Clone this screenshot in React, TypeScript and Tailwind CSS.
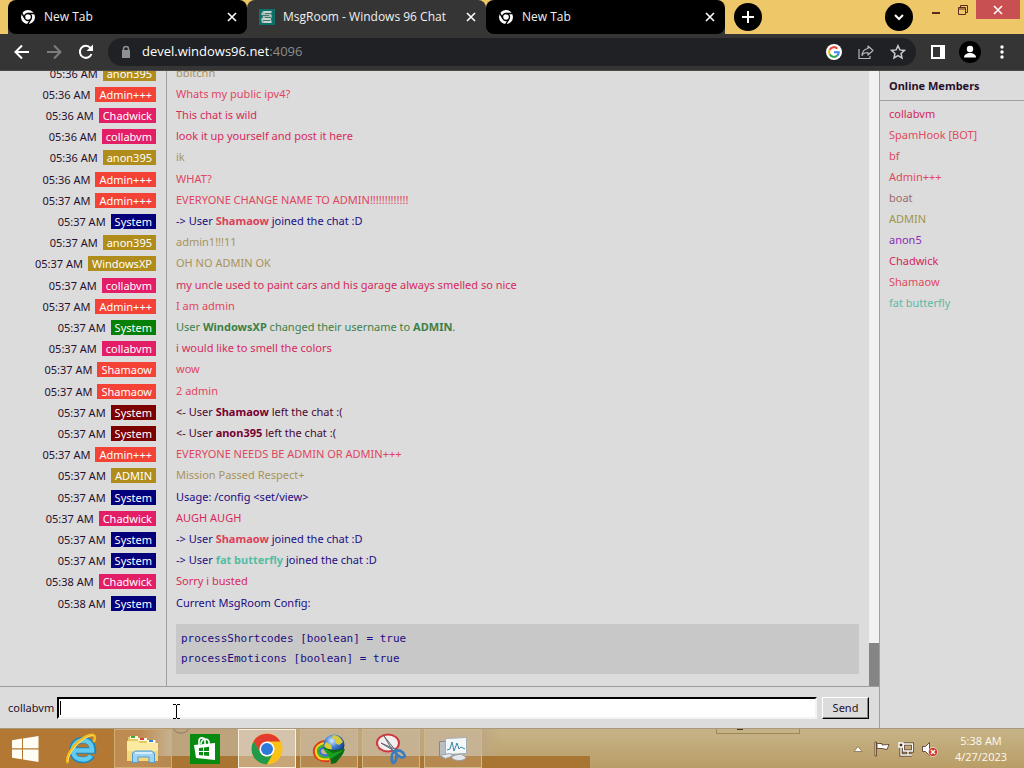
import React from 'react';
import type { ReactNode } from 'react';

type Message = { time: string; user: string; tag: string; tone: string; body: ReactNode };

const RED_TAG = 'bg-[#f44336]';
const PINK_TAG = 'bg-[#e31d66]';
const GOLD_TAG = 'bg-[#b08d1a]';
const NAVY_TAG = 'bg-[#04007c]';
const MAROON_TAG = 'bg-[#7c0000]';
const GREEN_TAG = 'bg-[#068006]';

const RED = 'text-[#e04560]';
const PINK = 'text-[#d62a5c]';
const GOLD = 'text-[#a8925a]';
const NAVY = 'text-[#1c0c80]';
const MAROON = 'text-[#4a0830]';
const GREEN = 'text-[#3c8048]';

const joined = (name: string, color: string) => (
  <>
    -&gt; User <b className={color}>{name}</b> joined the chat :D
  </>
);
const left = (name: string) => (
  <>
    &lt;- User <b className="text-[#780030]">{name}</b> left the chat :(
  </>
);

const messages: Message[] = [
  { time: '05:36 AM', user: 'anon395', tag: GOLD_TAG, tone: GOLD, body: 'bbitchh' },
  { time: '05:36 AM', user: 'Admin+++', tag: RED_TAG, tone: RED, body: 'Whats my public ipv4?' },
  { time: '05:36 AM', user: 'Chadwick', tag: PINK_TAG, tone: PINK, body: 'This chat is wild' },
  { time: '05:36 AM', user: 'collabvm', tag: PINK_TAG, tone: PINK, body: 'look it up yourself and post it here' },
  { time: '05:36 AM', user: 'anon395', tag: GOLD_TAG, tone: GOLD, body: 'ik' },
  { time: '05:36 AM', user: 'Admin+++', tag: RED_TAG, tone: RED, body: 'WHAT?' },
  { time: '05:37 AM', user: 'Admin+++', tag: RED_TAG, tone: RED, body: 'EVERYONE CHANGE NAME TO ADMIN!!!!!!!!!!!!!' },
  { time: '05:37 AM', user: 'System', tag: NAVY_TAG, tone: NAVY, body: joined('Shamaow', 'text-[#dc4058]') },
  { time: '05:37 AM', user: 'anon395', tag: GOLD_TAG, tone: GOLD, body: 'admin1!!!11' },
  { time: '05:37 AM', user: 'WindowsXP', tag: GOLD_TAG, tone: GOLD, body: 'OH NO ADMIN OK' },
  { time: '05:37 AM', user: 'collabvm', tag: PINK_TAG, tone: PINK, body: 'my uncle used to paint cars and his garage always smelled so nice' },
  { time: '05:37 AM', user: 'Admin+++', tag: RED_TAG, tone: RED, body: 'I am admin' },
  {
    time: '05:37 AM', user: 'System', tag: GREEN_TAG, tone: GREEN,
    body: <>User <b>WindowsXP</b> changed their username to <b>ADMIN</b>.</>,
  },
  { time: '05:37 AM', user: 'collabvm', tag: PINK_TAG, tone: PINK, body: 'i would like to smell the colors' },
  { time: '05:37 AM', user: 'Shamaow', tag: RED_TAG, tone: RED, body: 'wow' },
  { time: '05:37 AM', user: 'Shamaow', tag: RED_TAG, tone: RED, body: '2 admin' },
  { time: '05:37 AM', user: 'System', tag: MAROON_TAG, tone: MAROON, body: left('Shamaow') },
  { time: '05:37 AM', user: 'System', tag: MAROON_TAG, tone: MAROON, body: left('anon395') },
  { time: '05:37 AM', user: 'Admin+++', tag: RED_TAG, tone: RED, body: 'EVERYONE NEEDS BE ADMIN OR ADMIN+++' },
  { time: '05:37 AM', user: 'ADMIN', tag: GOLD_TAG, tone: GOLD, body: 'Mission Passed Respect+' },
  { time: '05:37 AM', user: 'System', tag: NAVY_TAG, tone: NAVY, body: 'Usage: /config <set/view>' },
  { time: '05:37 AM', user: 'Chadwick', tag: PINK_TAG, tone: PINK, body: 'AUGH AUGH' },
  { time: '05:37 AM', user: 'System', tag: NAVY_TAG, tone: NAVY, body: joined('Shamaow', 'text-[#dc4058]') },
  { time: '05:37 AM', user: 'System', tag: NAVY_TAG, tone: NAVY, body: joined('fat butterfly', 'text-[#54bca4]') },
  { time: '05:38 AM', user: 'Chadwick', tag: PINK_TAG, tone: PINK, body: 'Sorry i busted' },
  {
    time: '05:38 AM', user: 'System', tag: NAVY_TAG, tone: NAVY,
    body: (
      <>
        Current MsgRoom Config:
        <pre className="mt-[14px] bg-[#c8c8c8] p-[5px] font-['DejaVu_Sans_Mono',monospace] text-[11px] leading-5">
          {'processShortcodes [boolean] = true\nprocessEmoticons [boolean] = true'}
        </pre>
      </>
    ),
  },
];

const members = [
  ['collabvm', 'text-[#d4265a]'],
  ['SpamHook [BOT]', 'text-[#e04a60]'],
  ['bf', 'text-[#e04a60]'],
  ['Admin+++', 'text-[#e04a60]'],
  ['boat', 'text-[#9c6870]'],
  ['ADMIN', 'text-[#a09450]'],
  ['anon5', 'text-[#8a2cb4]'],
  ['Chadwick', 'text-[#d4265a]'],
  ['Shamaow', 'text-[#e04a60]'],
  ['fat butterfly', 'text-[#5cb8a6]'],
];

function ChromeMono() {
  return (
    <svg viewBox="0 0 16 16" className="size-4" aria-hidden="true">
      <circle cx="8" cy="8" r="7" fill="#fff" />
      <circle cx="8" cy="8" r="3.5" fill="none" stroke="#000" strokeWidth="1.4" />
      <path d="M8 4.5h7M4.9 9.7L1.6 3.9M11 9.8L7.7 15.4" stroke="#000" strokeWidth="1.4" />
    </svg>
  );
}

function RoomIcon() {
  return (
    <svg viewBox="0 0 16 16" className="size-4" aria-hidden="true">
      <path fill="#0c7068" d="M0 0h16v16H0z" />
      <path fill="#a8bcb8" d="M4 2h9l-1 3 1 2-1 3 1 4H3l-1-4 2-2-2-3z" />
      <path fill="none" stroke="#44786f" d="M6 4.500h6M3 6.500h7M6 8.500h6M4 11.500h7" />
      <path fill="none" stroke="#e0ece8" d="M5 3h7M4 10h7M5 13h7" />
    </svg>
  );
}

function ChromeColor() {
  return (
    <svg viewBox="0 0 32 32" className="size-8" aria-hidden="true">
      <circle cx="16" cy="16" r="15.5" fill="#fbc116" />
      <path fill="#e33b2e" d="M2.6 8.2A15.5 15.5 0 0 1 29.4 8.5H16L9.3 19.8z" />
      <path fill="#229a4b" d="M2.6 8.2 9.5 19.8A7.5 7.5 0 0 0 22.5 19.8L15.8 31.5A15.5 15.5 0 0 1 2.6 8.2z" />
      <circle cx="16" cy="16" r="7.6" fill="#fff" />
      <circle cx="16" cy="16" r="6" fill="#2f78dc" />
    </svg>
  );
}

function StartIcon() {
  return (
    <svg viewBox="0 0 28 26" className="h-[26px] w-7" aria-hidden="true">
      <path fill="#fffdf4" d="M1 4.2 11 2.6v9.7H1zM12 2.4 27.5 0v12.3H12zM1 13.4h10v9.8L1 21.8zM12 13.4h15.5V26L12 23.5z" />
    </svg>
  );
}

function ExplorerBrowserIcon() {
  return (
    <svg viewBox="0 0 32 32" className="size-8" aria-hidden="true">
      <path fill="none" stroke="#1b86c0" strokeWidth="6.500" d="M9 17.500h19C28 11 24 7 18 7S7.500 11 7.500 17.500 12 27 18 27c4 0 7-1.500 9-4.500" />
      <path fill="none" stroke="#62ccf0" strokeWidth="4.500" d="M9 17.500h18C27 11 23.500 7.500 18 7.500S8 11.500 8 17.500s4.500 9 10 9c4 0 6.500-1.500 8-4" />
      <path fill="none" stroke="#f4bd1c" strokeWidth="2.600" d="M3 30C.5 26 5 16 13 9S28 .5 29.500 3c.8 1.500.2 4-1 6" />
      <path fill="none" stroke="#ffe673" d="M3 28C3 24 7 16 14 10S26 2 28.500 3" />
    </svg>
  );
}

function FolderIcon() {
  return (
    <svg viewBox="0 0 34 32" className="h-8 w-[34px]" aria-hidden="true">
      <path fill="#e8c860" d="M2 4h10l2 3h16v21H2z" />
      <path fill="#fffbe0" d="M4 3h8v3H4zM12 5h9v3h-9zM21 7h8v3h-8z" />
      <path fill="#38a838" d="M5 3h4v2H5z" />
      <path fill="#e04030" d="M14 5h4v2h-4z" />
      <path fill="#3080d8" d="M23 7h4v2h-4z" />
      <path fill="#fbeaa0" d="M1 8h11l2 2h18v18H1z" />
      <path fill="#f3d97c" d="M1 18h31v10H1z" />
      <path fill="#9ed4f2" stroke="#4e9cd0" d="M6.500 29.500V20l3-2h16l3 2v9.500h-5.500V24h-11v5.500z" />
      <path stroke="#e4f6ff" strokeWidth="1.500" d="M9 20h17" />
    </svg>
  );
}

function StoreIcon() {
  return (
    <svg viewBox="0 0 30 30" className="size-[30px]" aria-hidden="true">
      <path fill="#078a10" d="M0 0h30v30H0z" />
      <path fill="#fff" d="m4 11 21-2v17L6 24z" />
      <path fill="none" stroke="#fff" strokeWidth="1.600" d="M9 11V7c0-4 5-4 6-1v5M11 10c0-5 7-7 8-2v3" />
      <path fill="#078a10" d="m9 14 4-.5V17H9zm5-.6 5-.6V17h-5zM9 18h4v3.500L9 21zm5 0h5v4l-5-.5z" />
    </svg>
  );
}

function GlobeIcon() {
  return (
    <svg viewBox="0 0 34 32" className="h-8 w-[34px]" aria-hidden="true">
      <defs>
        <radialGradient id="globe" cx=".4" cy=".3" r=".7">
          <stop offset="0" stopColor="#d8ecff" />
          <stop offset=".45" stopColor="#3f7fd0" />
          <stop offset="1" stopColor="#102c70" />
        </radialGradient>
      </defs>
      <path fill="none" stroke="#e03818" strokeWidth="2" d="M15 8C5 8 1 15 2 20s6 9 15 8" />
      <path fill="none" stroke="#f8d818" strokeWidth="2" d="M15 10C7 10 3 15 4 20s6 7 13 6" />
      <path fill="none" stroke="#38b030" strokeWidth="2" d="M15 12c-6 0-10 3-9 7s5 6 11 5" />
      <path fill="none" stroke="#3870d8" strokeWidth="2" d="M15 14c-4 0-8 2-7 5s4 4 9 3" />
      <circle cx="22" cy="12" r="10.500" fill="url(#globe)" />
      <path fill="#d8cc38" d="M21 2c5 0 8 3 10 7l-4 3-4-2 1-3-4-2zM14 9l5 3 1 4-4 1-4-4z" />
      <path fill="#0c6a14" d="m10 14 10 3 13-1-2 5-7 9-5 1-1-8z" />
      <path fill="#18a020" d="m10 14 11 6 11-3-13 9z" />
    </svg>
  );
}

function SnipIcon() {
  return (
    <svg viewBox="0 0 32 32" className="size-8" aria-hidden="true">
      <ellipse cx="13" cy="10" rx="11" ry="8.500" fill="#f4eeee" stroke="#cc3a40" strokeWidth="2" />
      <path fill="none" stroke="#e49090" strokeDasharray="2 1" d="M2 13c1 6 7 9 14 7" />
      <path fill="#e8e8ec" stroke="#606870" d="m9 3 12 15-2 2zM6 10l16 7-1 2z" />
      <path fill="none" stroke="#3a7cc0" strokeWidth="2.600" d="M19 19c-3 2-3 9-1 11 3 0 4-6 3-11zm1-1c4-2 9 1 10 5-2 3-7 1-10-4z" />
    </svg>
  );
}

function MonitorIcon() {
  return (
    <svg viewBox="0 0 32 28" className="h-7 w-8" aria-hidden="true">
      <path fill="#b8c0c4" stroke="#808890" d="M2.500 6.500h7v15h-7z" />
      <path fill="#f4f7f8" stroke="#a4acb0" d="m8.500 3.500 21-1v16l-21 1z" />
      <path fill="none" stroke="#3c88a8" d="m10 15 3-1 2-7 2 9 3-8 2 6 2-2 4 2" />
      <path fill="#e4e8ea" stroke="#98a0a4" d="m2.500 20.500 10-2 5 2-9 3zM14 21l10-2 5 3c0 4-11 5-14 1z" />
    </svg>
  );
}

function GoogleIcon() {
  return (
    <svg viewBox="0 0 16 16" className="size-4" aria-hidden="true">
      <circle cx="8" cy="8" r="8" fill="#fff" />
      <g fill="none" strokeWidth="2">
        <path stroke="#e8453c" d="M3.700 5.700A4.800 4.800 0 0 1 11.400 4.600" />
        <path stroke="#f8b912" d="M3.700 5.700a4.800 4.800 0 0 0 0 4.600" />
        <path stroke="#34a853" d="M3.700 10.300A4.800 4.800 0 0 0 11.200 11.600" />
        <path stroke="#4285f4" d="M8 8.300h4.800c0 1.400-.6 2.500-1.600 3.300" />
      </g>
    </svg>
  );
}

const stroke = { fill: 'none', stroke: 'currentColor', strokeWidth: 2 } as const;

function CloseGlyph() {
  return (
    <svg viewBox="0 0 16 16" className="size-4" aria-hidden="true">
      <path {...stroke} strokeWidth="1.600" d="m4 4 8 8m0-8-8 8" />
    </svg>
  );
}

function Tab({ title, icon, active = false }: { title: string; icon: ReactNode; active?: boolean }) {
  return (
    <div className={`flex w-[239px] items-center rounded-lg pr-[7px] pl-3 ${active ? 'rounded-b-none bg-[#353535]' : 'bg-black'}`}>
      <button role="tab" aria-selected={active} className="flex flex-1 items-center gap-2 text-left text-xs whitespace-nowrap text-[#f0f0f0]">
        {icon}
        {title}
      </button>
      <button aria-label={`Close ${title}`} className="text-white">
        <CloseGlyph />
      </button>
    </div>
  );
}

function ToolButton({ label, children, className = 'text-white' }: { label: string; children: ReactNode; className?: string }) {
  return (
    <button aria-label={label} className={`grid size-8 shrink-0 place-items-center ${className}`}>
      {children}
    </button>
  );
}

function Browser() {
  return (
    <header className="shrink-0 font-['Open_Sans','Noto_Sans',sans-serif]">
      <div className="flex h-[34px] bg-[#eec868] pl-2">
        <div role="tablist" className="flex bg-[linear-gradient(#eec868_50%,#353535_50%)]">
          <Tab title="New Tab" icon={<ChromeMono />} />
          <Tab title="MsgRoom - Windows 96 Chat" icon={<RoomIcon />} active />
          <Tab title="New Tab" icon={<ChromeMono />} />
        </div>
        <button aria-label="New tab" className="mt-[3px] ml-[9px] grid size-7 place-items-center rounded-full bg-black text-white">
          <svg viewBox="0 0 14 14" className="size-3.5"><path {...stroke} d="M7 1v12M1 7h12" /></svg>
        </button>
        <button aria-label="Search tabs" className="mt-[3px] ml-auto grid size-7 place-items-center rounded-full bg-black text-white">
          <svg viewBox="0 0 14 14" className="size-3.5"><path {...stroke} d="m3 5 4 4 4-4" /></svg>
        </button>
        <div className="ml-[10px] flex h-[19px] items-center pr-1 text-[#5a2c1c]">
          <button aria-label="Minimize" className="grid w-[26px] place-items-center">
            <svg viewBox="0 0 14 14" className="size-3.5"><path {...stroke} d="M3 10h8" /></svg>
          </button>
          <button aria-label="Restore" className="grid w-[27px] place-items-center">
            <svg viewBox="0 0 14 14" className="size-3.5"><path {...stroke} strokeWidth="1" d="M2.500 4.500h7v7h-7zM2.500 6h7M4.500 4V2.500h7v7H10" /></svg>
          </button>
          <button aria-label="Close window" className="grid h-[19px] w-11 place-items-center bg-[#c84f52] text-white">
            <CloseGlyph />
          </button>
        </div>
      </div>
      <div className="flex h-[37px] items-center border-b border-[#4a4a4a] bg-[#353535] px-[6px]">
        <ToolButton label="Back">
          <svg viewBox="0 0 16 16" className="size-4"><path {...stroke} d="M15 8H2m6-6.500L1.500 8 8 14.500" /></svg>
        </ToolButton>
        <ToolButton label="Forward" className="text-[#7c7c7c]">
          <svg viewBox="0 0 16 16" className="size-4"><path {...stroke} d="M1 8h13M8 1.500 14.500 8 8 14.500" /></svg>
        </ToolButton>
        <ToolButton label="Reload">
          <svg viewBox="0 0 16 16" className="size-4"><path {...stroke} d="M13.500 10A6 6 0 1 1 12.500 4" /><path fill="currentColor" d="M15 .5V7H8.500z" /></svg>
        </ToolButton>
        <div className="mx-[6px] flex h-7 min-w-0 flex-1 items-center rounded-full bg-[#202124] pr-[2px] pl-[13px]">
          <svg viewBox="0 0 10 14" className="mr-[11px] h-3.5 w-2.5 shrink-0 text-[#8e9094]">
            <path fill="currentColor" d="M1 5h8v8H1z" />
            <path {...stroke} strokeWidth="1.500" d="M2.500 6V4a2.500 2.500 0 0 1 5 0v2" />
          </svg>
          <input aria-label="Address" defaultValue="devel.windows96.net" className="field-sizing-content text-[13px] text-white outline-none" />
          <span className="flex-1 text-[13px] text-[#8c8c8c]">:4096</span>
          <ToolButton label="Search with Google"><GoogleIcon /></ToolButton>
          <ToolButton label="Share" className="text-[#b4b6b8]">
            <svg viewBox="0 0 16 16" className="size-4"><path {...stroke} strokeWidth="1.200" strokeLinejoin="round" d="M1 5v9.500h11V12M10 2l5 4.500-5 4.500V8.500C7 8.500 5 9.500 4 11.500 4.300 7.500 6.500 5 10 4.500z" /></svg>
          </ToolButton>
          <ToolButton label="Bookmark" className="text-[#c8cacc]">
            <svg viewBox="0 0 16 16" className="size-4"><path {...stroke} strokeWidth="1.500" d="m8 1.700 1.900 4.200 4.600.5-3.400 3.100.9 4.500L8 11.700 4 14l.9-4.500-3.400-3.100 4.600-.5z" /></svg>
          </ToolButton>
        </div>
        <ToolButton label="Side panel">
          <svg viewBox="0 0 14 14" className="size-3.5"><path {...stroke} d="M1 1h12v12H1z" /><path fill="currentColor" d="M9 1h4v12H9z" /></svg>
        </ToolButton>
        <ToolButton label="Profile">
          <svg viewBox="0 0 22 22" className="size-[22px]"><circle cx="11" cy="11" r="11" fill="#000" /><circle cx="11" cy="8" r="3.200" fill="#fff" /><path fill="#fff" d="M5 16.500c0-3 3-4.500 6-4.500s6 1.500 6 4.500z" /></svg>
        </ToolButton>
        <ToolButton label="Menu">
          <svg viewBox="0 0 4 14" className="h-3.5 w-1"><g fill="currentColor"><circle cx="2" cy="2" r="1.700" /><circle cx="2" cy="7" r="1.700" /><circle cx="2" cy="12" r="1.700" /></g></svg>
        </ToolButton>
      </div>
    </header>
  );
}

function Chat() {
  return (
    <main className="flex min-h-0 flex-1 bg-[#dcdcdc] font-['Noto_Sans',sans-serif] text-[11px] leading-[15px] text-[#28102c]">
      <section className="flex min-w-0 flex-1 flex-col">
        <div className="flex min-h-0 flex-1">
          <div className="flex min-w-0 flex-1 flex-col overflow-hidden">
            <ul className="-mt-2 flex flex-1 flex-col">
              {messages.map((m, i) => (
                <li key={i} className="grid min-h-[21px] shrink-0 grid-cols-[167px_minmax(0,1fr)] last:grow nth-[5n]:min-h-[22px]">
                  <div className="flex items-start justify-end gap-[5px] border-r border-[#a0a0a0] pt-[3px] pr-[10px]">
                    <time>{m.time}</time>
                    <span className={`px-1 text-white ${m.tag}`}>{m.user}</span>
                  </div>
                  <div className={`pt-[2px] pr-[10px] pl-[9px] ${m.tone}`}>{m.body}</div>
                </li>
              ))}
            </ul>
          </div>
          <div className="flex w-[10px] flex-col justify-end bg-[#f1f1f1]">
            <div className="h-[43px] bg-[#858585]" />
          </div>
        </div>
        <form className="flex h-[42px] items-center border-t border-[#9c9c9c] pr-[10px] pl-2" onSubmit={(e) => e.preventDefault()}>
          <label htmlFor="message" className="w-[49px]">collabvm</label>
          <div className="relative flex flex-1">
            <input id="message" className="h-[22px] w-full border-2 border-t-black border-r-[#f4f4f4] border-b-[#f4f4f4] border-l-black bg-white px-1 outline-none" />
            <span className="absolute top-1 left-[3px] h-[14px] w-px bg-black" />
            <svg viewBox="0 0 7 15" className="absolute top-[7px] left-[116px] h-[15px] w-[7px]" aria-hidden="true">
              <path fill="none" stroke="#000" d="M0 .5h3M4 .5h3M3.500 1v13M0 14.500h3M4 14.500h3" />
            </svg>
          </div>
          <button className="ml-[5px] h-[22px] w-[47px] border border-t-white border-r-black border-b-black border-l-white bg-[#dcdcdc] shadow-[inset_-1px_-1px_#888]">
            Send
          </button>
        </form>
      </section>
      <aside className="w-[145px] shrink-0 border-l border-[#a0a0a0]">
        <h2 className="flex h-[30px] items-center border-b border-[#a0a0a0] pl-[9px] font-bold">Online Members</h2>
        <ul className="pt-[2px] pl-[9px] leading-[21px]">
          {members.map(([name, color]) => (
            <li key={name} className={color}>{name}</li>
          ))}
        </ul>
      </aside>
    </main>
  );
}

const apps = [
  { name: 'Internet Explorer', icon: <ExplorerBrowserIcon />, frame: 'border-transparent' },
  { name: 'File Explorer', icon: <FolderIcon />, frame: 'border-[#d0ac70] bg-white/15' },
  { name: 'Store', icon: <StoreIcon />, frame: 'border-transparent' },
  { name: 'Google Chrome', icon: <ChromeColor />, frame: 'border-[#f8f0dc] bg-white/35' },
  { name: 'Download Manager', icon: <GlobeIcon />, frame: 'border-[#d0b888] bg-white/15' },
  { name: 'Snipping Tool', icon: <SnipIcon />, frame: 'border-[#d0b888] bg-white/15' },
  { name: 'System Monitor', icon: <MonitorIcon />, frame: 'border-[#d0b888] bg-white/15' },
];

function Taskbar() {
  return (
    <footer className="relative flex h-10 shrink-0 items-stretch border-t border-[#a89880] font-['Open_Sans','Noto_Sans',sans-serif] [background:linear-gradient(90deg,#b37834_0,#b37834_140px,transparent_170px),linear-gradient(#a87532,#a87532)_0_27px/590px_100%_no-repeat,linear-gradient(90deg,#bda27a_0,#bda680_480px,transparent_500px),linear-gradient(#c6b488,#b99d66)]">
      <svg viewBox="0 0 16 6" className="absolute top-0 left-[173px] h-[6px] w-4" aria-hidden="true">
        <path fill="none" stroke="#907860" d="M.5 0c3 5.500 12 5.500 15 0" />
      </svg>
      <button aria-label="Start" className="grid w-[50px] place-items-center">
        <StartIcon />
      </button>
      <nav className="ml-[2px] flex gap-1">
        {apps.map((app) => (
          <button key={app.name} aria-label={app.name} className={`grid w-[58px] place-items-center border ${app.frame}`}>
            {app.icon}
          </button>
        ))}
      </nav>
      <div className="mr-auto ml-[234px] h-[5px] w-[84px] border border-t-0 border-[#9c8858]">
        <div className="ml-5 h-px w-[6px] bg-[#3c3020]" />
      </div>
      <div className="flex items-center text-[#fffaf0]">
        <button aria-label="Show hidden icons" className="grid w-6 place-items-center">
          <svg viewBox="0 0 10 6" className="h-[6px] w-[10px]"><path fill="#fff" stroke="#806040" strokeWidth=".7" d="m5 .5 4 5H1z" /></svg>
        </button>
        <button aria-label="Action Center" className="grid w-6 place-items-center">
          <svg viewBox="0 0 16 16" className="size-4"><path fill="#fff" stroke="#4c3420" strokeWidth=".8" d="M1 1h1.500v14H1zM3 2.500h5v1.500l7-.5-2 5-5-1H3z" /></svg>
        </button>
        <button aria-label="Network" className="grid w-6 place-items-center">
          <svg viewBox="0 0 16 16" className="size-4"><g fill="none" stroke="#4c3420" strokeWidth="3"><path d="M5.500 3h9v7h-9zM10 10v4M6 14h8M3 6v8h3" /></g><g fill="none" stroke="#fff" strokeWidth="1.400"><path d="M5.500 3h9v7h-9zM10 10v4M6 14h8M3 6v8h3" /><path fill="#4c3420" d="M1 2h4v4H1z" /></g></svg>
        </button>
        <button aria-label="Volume muted" className="grid w-6 place-items-center">
          <svg viewBox="0 0 16 16" className="size-4"><path fill="#fff" stroke="#4c3420" strokeWidth=".8" d="M.5 5.500h3l4-4v13l-4-4h-3z" /><circle cx="11" cy="11" r="4.600" fill="#d03828" stroke="#fff" strokeWidth=".6" /><path stroke="#fff" strokeWidth="1.500" d="m9 9 4 4m0-4-4 4" /></svg>
        </button>
        <div className="w-[82px] pr-1 text-center text-[11px] leading-4">
          <p>5:38 AM</p>
          <p>4/27/2023</p>
        </div>
      </div>
    </footer>
  );
}

export default function App() {
  return (
    <div className="flex h-screen flex-col overflow-hidden">
      <Browser />
      <Chat />
      <Taskbar />
    </div>
  );
}
